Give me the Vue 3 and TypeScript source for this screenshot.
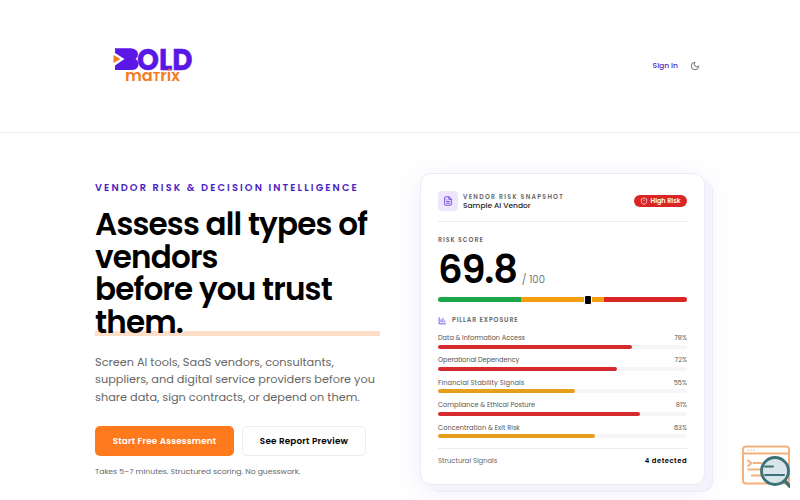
<template>
    <div class="page">
        <header class="topbar">
            <svg class="logo" width="82" height="36" viewBox="0 0 82 36" role="img">
                <path d="M4 1.200H20Q27 2 27 7.500Q27 10 24.500 12Q27.500 14 27.500 17.500Q27 23 20 23H4V18.500L13.500 12L4 6Z" fill="#5a17e6" />
                <path d="M2.500 8L9.500 12L2.500 16Z" fill="#f47b20" />
                <text x="26" y="22.500" textLength="55.500" lengthAdjust="spacingAndGlyphs" class="logo-top">OLD</text>
                <text x="14" y="34" textLength="55" lengthAdjust="spacingAndGlyphs" class="logo-bottom">ma<tspan class="small">T</tspan>rix</text>
            </svg>
            <nav class="nav">
                <a class="sign-in">Sign In</a>
                <svg width="10" height="10" viewBox="0 0 24 24" class="moon">
                    <path d="M12 3a6 6 0 0 0 9 9 9 9 0 1 1-9-9Z" />
                </svg>
            </nav>
        </header>

        <main class="hero">
            <section class="intro">
                <p class="eyebrow">VENDOR RISK &amp; DECISION INTELLIGENCE</p>
                <h1 class="title">
                    Assess all types of vendors
                    <span class="marked">before you trust them.</span>
                </h1>
                <p class="lead">
                    Screen AI tools, SaaS vendors, consultants, suppliers, and digital service providers before you
                    share data, sign contracts, or depend on them.
                </p>
                <div class="actions">
                    <button class="btn primary">Start Free Assessment</button>
                    <button class="btn secondary">See Report Preview</button>
                </div>
                <p class="note">Takes 5–7 minutes. Structured scoring. No guesswork.</p>
            </section>

            <section class="card">
                <div class="card-head">
                    <div class="doc">
                        <svg width="10" height="10" viewBox="0 0 24 24">
                            <path d="M15 2H6a2 2 0 0 0-2 2v16a2 2 0 0 0 2 2h12a2 2 0 0 0 2-2V7ZM14 2v6h6M8 13h8M8 17h8M8 9h2" />
                        </svg>
                    </div>
                    <div class="names">
                        <span class="kicker">VENDOR RISK SNAPSHOT</span>
                        <span class="vendor">Sample AI Vendor</span>
                    </div>
                    <div class="badge">
                        <svg width="8" height="8" viewBox="0 0 24 24">
                            <path d="M20 13c0 5-3.500 7.500-8 9-4.500-1.500-8-4-8-9V6c3 0 6-2 8-4 2 2 5 4 8 4ZM12 8v4M12 16h.01" />
                        </svg>
                        <span>High Risk</span>
                    </div>
                </div>
                <div class="score-label">RISK SCORE</div>
                <div class="score">
                    <span class="value">69.8</span>
                    <span class="total">/ 100</span>
                </div>
                <div class="scale">
                    <div class="low"></div>
                    <div class="mid"></div>
                    <div class="high"></div>
                    <div class="marker"></div>
                </div>
                <div class="pillar-title">
                    <svg width="9" height="9" viewBox="0 0 24 24">
                        <path d="M3 3v18h18M8 17V9M13 17V5M18 17v-5" />
                    </svg>
                    <span>PILLAR EXPOSURE</span>
                </div>
                <div v-for="pillar in pillars" :key="pillar.name" class="pillar">
                    <div class="pillar-row">
                        <span :style="{ letterSpacing: pillar.tracking + 'px' }">{{ pillar.name }}</span>
                        <span>{{ pillar.percent }}%</span>
                    </div>
                    <div class="track">
                        <div class="fill" :class="pillar.level" :style="{ width: pillar.percent + '%' }"></div>
                    </div>
                </div>
                <div class="card-foot">
                    <span>Structural Signals</span>
                    <span class="detected">4 detected</span>
                </div>
            </section>
        </main>

        <svg class="helper" width="49" height="45" viewBox="0 0 49 45">
            <g fill="none" stroke="#f5b27d" stroke-width="2">
                <rect x="2" y="3.500" width="46" height="37" rx="3" fill="#fff" />
                <path d="M2 10.500H48M6.500 17l4 3.300-4 3.300M12 20h9M6.500 26.500h14M10 32.500h12" />
                <path d="M6 7h8" stroke-width="1.200" stroke-dasharray="1.500 1.500" />
            </g>
            <g stroke="#3b7178" stroke-linecap="round">
                <circle cx="34" cy="28" r="13.500" fill="#d8e5ea" stroke-width="2.800" />
                <path d="M44 38L50 44.500" stroke-width="3.500" />
                <path d="M24 23.500h8M24 32h19" stroke-width="2" />
            </g>
        </svg>
    </div>
</template>

<script setup lang="ts">
interface Pillar {
    name: string
    percent: number
    level: 'red' | 'amber'
    tracking: number
}

const pillars: Pillar[] = [
    { name: 'Data & Information Access', percent: 78, level: 'red', tracking: -0.04 },
    { name: 'Operational Dependency', percent: 72, level: 'red', tracking: -0.08 },
    { name: 'Financial Stability Signals', percent: 55, level: 'amber', tracking: 0.13 },
    { name: 'Compliance & Ethical Posture', percent: 81, level: 'red', tracking: 0 },
    { name: 'Concentration & Exit Risk', percent: 63, level: 'amber', tracking: 0.04 }
]
</script>

<style>
body {
    margin: 0;
    background: #fff;
}
</style>

<style scoped>
.page {
    position: relative;
    width: 800px;
    height: 500px;
    overflow: hidden;
    font-family: Poppins, Inter, sans-serif;
    color: #000;
}

p,
h1 {
    margin: 0;
}

svg path {
    stroke-linejoin: round;
}

.topbar {
    box-sizing: border-box;
    height: 133px;
    padding: 0 100px 0 111px;
    border-bottom: 1px solid #ececef;
    display: flex;
    align-items: center;
    justify-content: space-between;
}

.logo {
    margin-top: -3px;
    overflow: visible;
}

.logo-top {
    font-size: 29.500px;
    font-weight: 700;
    fill: #5a17e6;
    stroke: #5a17e6;
    stroke-width: 0.500px;
}

.logo-bottom {
    font-size: 16px;
    font-weight: 600;
    fill: #f47b20;
}

.small {
    font-size: 13px;
}

.nav {
    display: flex;
    align-items: center;
    gap: 12px;
}

.sign-in {
    font-size: 7.600px;
    line-height: 12px;
    font-weight: 500;
    letter-spacing: -0.020px;
    color: #4b1fc4;
}

.moon {
    fill: none;
    stroke: #555;
    stroke-width: 2;
}

.hero {
    display: flex;
    gap: 40px;
    padding: 40px 95px 0;
}

.intro {
    width: 285px;
    padding-top: 8px;
}

.eyebrow {
    font-size: 9.800px;
    line-height: 14px;
    font-weight: 600;
    letter-spacing: 2.110px;
    white-space: nowrap;
    color: #4b1fc4;
}

.title {
    margin-top: 13px;
    font-size: 31px;
    line-height: 32.500px;
    font-weight: 600;
    letter-spacing: -0.820px;
}

.marked {
    display: block;
    background: linear-gradient(#fddfc9, #fddfc9) 0 58px / 100% 5px no-repeat;
}

.lead {
    margin-top: 15.500px;
    font-size: 11.300px;
    line-height: 17.700px;
    color: #666;
}

.actions {
    display: flex;
    gap: 8px;
    margin-top: 19.500px;
}

.btn {
    box-sizing: border-box;
    height: 30px;
    padding: 0;
    border: 0;
    border-radius: 5px;
    font-family: inherit;
    font-size: 8.800px;
    font-weight: 600;
    letter-spacing: 0.190px;
}

.primary {
    width: 139px;
    background: #ff7a1c;
    color: #fff;
}

.secondary {
    width: 124px;
    border: 1px solid #ececf0;
    background: #fff;
    color: #000;
}

.note {
    margin-top: 10px;
    font-size: 7.700px;
    line-height: 12px;
    letter-spacing: 0.010px;
    color: #666;
}

.card {
    box-sizing: border-box;
    width: 285px;
    height: 312px;
    padding: 17px 17px 0;
    border: 1px solid #eceaf2;
    border-radius: 11px;
    background: #fff;
    box-shadow: 7px 6px 0 #f5f2fc, 8px 7px 0 #eeebf8, 0 6px 28px rgba(100, 60, 230, 0.1);
}

.card-head {
    display: flex;
    align-items: center;
    height: 30px;
    border-bottom: 1px solid #ebebee;
}

.doc {
    display: flex;
    align-items: center;
    justify-content: center;
    width: 20px;
    height: 20px;
    margin-bottom: 10px;
    border-radius: 4px;
    background: #eee6fc;
}

.doc svg,
.pillar-title svg {
    fill: none;
    stroke: #5a2ee0;
    stroke-width: 2;
}

.names {
    display: flex;
    flex-direction: column;
    flex: 1;
    margin: 0 0 9px 5px;
}

.kicker {
    font-size: 6.200px;
    line-height: 9px;
    font-weight: 600;
    letter-spacing: 1.300px;
    color: #666;
}

.vendor {
    font-size: 7.500px;
    line-height: 10px;
    font-weight: 500;
    color: #222;
}

.badge {
    display: flex;
    align-items: center;
    justify-content: center;
    gap: 2px;
    width: 53px;
    height: 12px;
    margin-bottom: 10px;
    border-radius: 6px;
    background: #da2525;
    color: #fff;
    font-size: 6.500px;
    font-weight: 600;
}

.badge svg {
    fill: none;
    stroke: #fff;
    stroke-width: 2;
}

.score-label {
    margin-top: 13px;
    font-size: 6.300px;
    line-height: 9px;
    font-weight: 600;
    letter-spacing: 0.940px;
    color: #666;
}

.score {
    display: flex;
    align-items: baseline;
    gap: 5px;
    height: 53px;
    line-height: 51px;
}

.value {
    font-size: 38.500px;
    font-weight: 600;
    letter-spacing: -1.200px;
}

.total {
    font-size: 10px;
    color: #777;
}

.scale {
    position: relative;
    display: flex;
    height: 5px;
    border-radius: 3px;
}

.low {
    width: 33.300%;
    border-radius: 3px 0 0 3px;
    background: #1ba548;
}

.mid {
    width: 33.300%;
    background: #f59e0b;
}

.high {
    flex: 1;
    border-radius: 0 3px 3px 0;
    background: #da2525;
}

.marker {
    position: absolute;
    left: 145.500px;
    top: -2px;
    width: 6px;
    height: 8px;
    border: 1px solid #fff;
    border-radius: 2px;
    background: #000;
}

.pillar-title {
    display: flex;
    align-items: center;
    gap: 5px;
    height: 10px;
    margin-top: 13px;
    margin-bottom: 7px;
    font-size: 6.300px;
    font-weight: 600;
    letter-spacing: 0.870px;
    color: #666;
}

.pillar {
    height: 22.400px;
}

.pillar-row {
    display: flex;
    justify-content: space-between;
    height: 12.500px;
    font-size: 6.600px;
    line-height: 11px;
    color: #555;
}

.track {
    height: 4px;
    border-radius: 2px;
    background: #f6f6f9;
}

.fill {
    height: 4px;
    border-radius: 2px;
}

.red {
    background: #d52a2e;
}

.amber {
    background: #e79e1c;
}

.card-foot {
    display: flex;
    justify-content: space-between;
    margin-top: 4px;
    padding-top: 7px;
    border-top: 1px solid #ebebee;
    font-size: 6.800px;
    line-height: 10px;
    color: #666;
}

.detected {
    font-weight: 600;
    letter-spacing: 0.500px;
    color: #000;
}

.helper {
    position: absolute;
    left: 741px;
    top: 443px;
}
</style>
